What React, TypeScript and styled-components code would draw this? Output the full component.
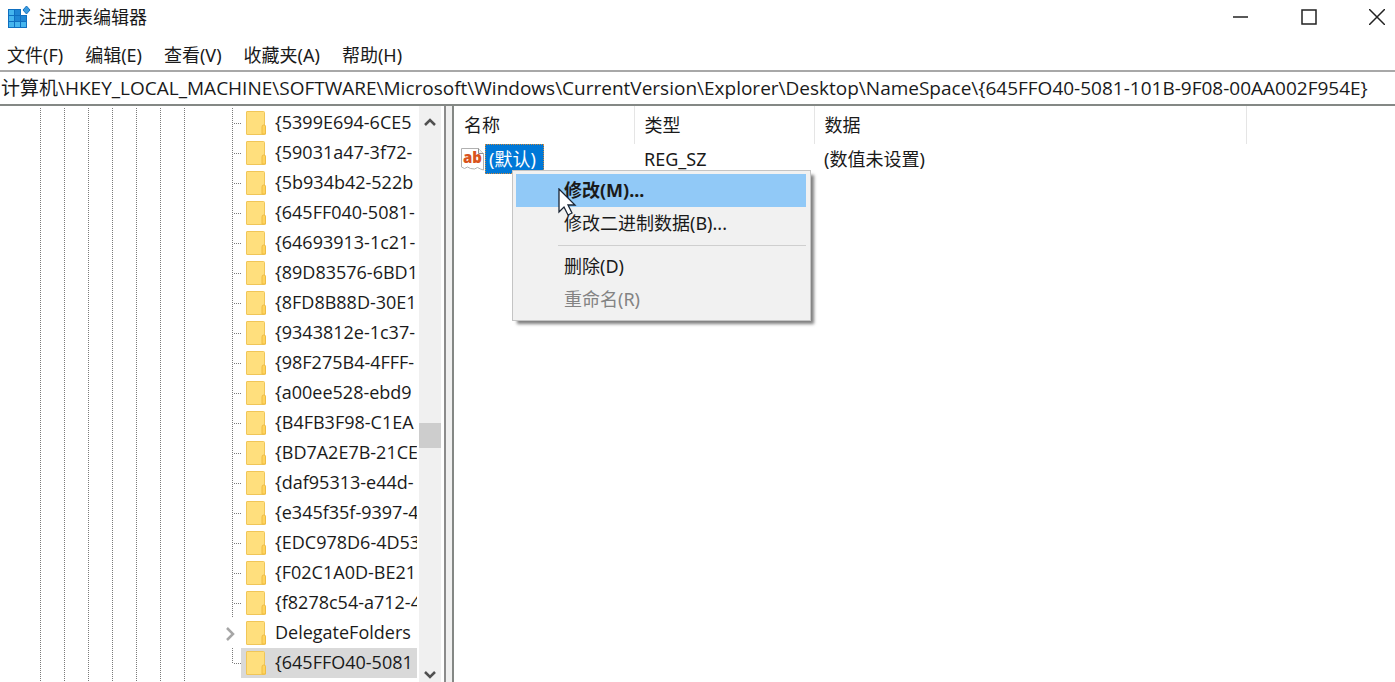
import React from "react";
import styled, { createGlobalStyle, css } from "styled-components";

const GlobalStyle = createGlobalStyle`
  * { box-sizing: border-box; }
  body {
    margin: 0;
    background: #fff;
    color: #1a1a1a;
    font: 18px/24px "Noto Sans", "Noto Sans CJK SC", sans-serif;
  }
  button, input {
    margin: 0;
    padding: 0;
    border: 0;
    background: none;
    color: inherit;
    font: inherit;
  }
`;

const Window = styled.div`
  display: flex;
  flex-direction: column;
  height: 100vh;
  overflow: hidden;
`;

const TitleBar = styled.header`
  display: flex;
  align-items: center;
  gap: 8px;
  height: 34px;
  padding-left: 7px;
`;

const Title = styled.h1`
  flex: 1;
  margin: 0;
  font-size: 18px;
  font-weight: 400;
`;

const CaptionButtons = styled.div`
  display: flex;
  gap: 32px;
`;

const CaptionButton = styled.button`
  display: flex;
  align-items: center;
  justify-content: center;
  width: 36px;
  height: 34px;
  svg { fill: none; stroke: #222; stroke-width: 1.5; }
`;

const MenuBar = styled.nav`
  display: flex;
  gap: 22px;
  height: 36px;
  padding: 6px 7px 0;
  align-items: center;
`;

const MenuBarItem = styled.button`
  white-space: nowrap;
`;

const AddressBar = styled.div`
  height: 36px;
  border-top: 2px solid #a8a8a8;
  border-bottom: 2px solid #848885;
`;

const AddressInput = styled.input`
  display: block;
  width: 100%;
  height: 32px;
  padding: 0 0 2px 1px;
  outline: 0;
  font-family: "Open Sans", "Noto Sans CJK SC", sans-serif;
  font-size: 19px;
`;

const Panes = styled.main`
  display: flex;
  flex: 1;
  min-height: 0;
`;

const TreePane = styled.section`
  display: flex;
  width: 446px;
  flex: none;
  border-right: 2px solid #8c8c8c;
`;

const Splitter = styled.div`
  width: 6px;
  flex: none;
  background: #f0f0f0;
`;

const TreeList = styled.ul`
  flex: 1;
  min-width: 0;
  margin: 0;
  padding: 2px 2px 0 28px;
  overflow: hidden;
  list-style: none;
`;

const TreeRow = styled.li`
  display: flex;
  height: 30px;
`;

const dots = css`
  background-image: repeating-linear-gradient(#7a7a7a 0 1px, transparent 1px 2px);
`;

const Guide = styled.span<{ $blank?: boolean }>`
  width: 24px;
  flex: none;
  padding-left: 12px;
  &::before {
    content: "";
    display: ${(p) => (p.$blank ? "none" : "block")};
    width: 1px;
    height: 100%;
    ${dots}
  }
`;

const Branch = styled.span<{ $last?: boolean }>`
  display: grid;
  grid-template-columns: 1px 9px;
  grid-template-rows: 15px 15px;
  width: 21px;
  flex: none;
  padding-left: 12px;
  &::before {
    content: "";
    grid-row: ${(p) => (p.$last ? "1" : "1 / 3")};
    ${dots}
  }
  &::after {
    content: "";
    grid-column: 2;
    grid-row: 2;
    height: 1px;
    background-image: repeating-linear-gradient(90deg, transparent 0 1px, #7a7a7a 1px 2px);
  }
`;

const Expander = styled.button`
  display: flex;
  align-items: center;
  width: 21px;
  flex: none;
  padding-left: 5px;
`;

const TreeItem = styled.span<{ $selected?: boolean }>`
  display: flex;
  flex: 1;
  min-width: 0;
  align-items: center;
  gap: 9px;
  padding-left: 5px;
  overflow: hidden;
  white-space: nowrap;
  background: ${(p) => (p.$selected ? "#d9d9d9" : "transparent")};
  svg { flex: none; }
`;

const TreeLabel = styled.span`
  padding-bottom: 2px;
  font-family: "Open Sans", "Noto Sans CJK SC", sans-serif;
`;

const ParentItem = styled(TreeItem)`
  padding: 2px 0 0 2px;
`;

const ScrollBar = styled.div`
  display: flex;
  flex-direction: column;
  align-items: center;
  width: 22px;
  margin-right: 3px;
  flex: none;
  background: #f0f0f0;
`;

const ScrollButton = styled.button<{ $height: number }>`
  display: flex;
  align-items: center;
  justify-content: center;
  width: 22px;
  height: ${(p) => p.$height}px;
  flex: none;
`;

const ScrollTrack = styled.div`
  display: grid;
  flex: 1;
  width: 100%;
  grid-template-rows: 17fr 25px 13fr;
`;

const ScrollThumb = styled.div`
  grid-row: 2;
  background: #cdcdcd;
`;

const ValuePane = styled.section`
  position: relative;
  flex: 1;
  min-width: 0;
  border-left: 2px solid #848885;
`;

const ValueTable = styled.table`
  width: 793px;
  border-collapse: collapse;
  table-layout: fixed;
  th, td {
    padding: 0 0 0 10px;
    text-align: left;
    font-weight: 400;
    white-space: nowrap;
  }
  th { height: 38px; border-right: 1px solid #e5e5e5; }
  td { height: 30px; }
  td:first-child { padding-left: 7px; }
`;

const ValueName = styled.div`
  display: flex;
  align-items: center;
  gap: 1px;
`;

const SelectedName = styled.span`
  height: 30px;
  padding: 0 7px 0 3px;
  border: 1px dotted #d08a3c;
  line-height: 28px;
  background: #0078d7;
  color: #fff;
`;

const ContextMenu = styled.ul`
  position: absolute;
  top: 64px;
  left: 58px;
  width: 299px;
  margin: 0;
  padding: 3px 4px 4px 3px;
  border: 1px solid #c4c4c4;
  list-style: none;
  background: #f1f1f1;
  box-shadow: 4px 4px 3px -1px rgba(0, 0, 0, 0.5);
`;

const ContextItem = styled.button<{ $active?: boolean }>`
  display: block;
  width: 100%;
  height: 33px;
  padding: 0 0 1px 48px;
  text-align: left;
  font-weight: ${(p) => (p.$active ? 700 : 400)};
  background: ${(p) => (p.$active ? "#91c9f7" : "transparent")};
  &:disabled { color: #838383; }
`;

const Separator = styled.li`
  height: 1px;
  margin: 5px 0 4px 42px;
  background: #cfcfcf;
`;

const Cursor = styled.svg`
  position: absolute;
  top: 82px;
  left: 104px;
  pointer-events: none;
`;

const RegistryIcon = () => (
  <svg width="24" height="24" viewBox="0 0 24 24" aria-hidden="true">
    <path d="M1 4h13v6h6v13H1z" fill="#0f6fc0" />
    <path d="M2 5h5v5H2zM2 11h5v5H2zM2 17h5v5H2zM8 17h5v5H8zM14 17h5v5h-5z" fill="#45b5ee" />
    <path d="M8 5h5v5H8zM8 11h5v5H8zM14 11h5v5h-5z" fill="#1f86d4" />
    <path d="M19.500 1l3.500 4-3.500 4L16 5z" fill="#3a9be0" stroke="#1673bf" />
  </svg>
);

const FolderIcon = () => (
  <svg width="20" height="24" viewBox="0 0 20 24" aria-hidden="true">
    <path d="M1 .5h16.500q1 0 1 1V14l1 1v7.500q0 1-1 1H1q-.5 0-.5-.5V1Q.5.5 1 .5z" fill="#ffdf7d" stroke="#f0c658" />
    <path d="M16 23v-7q0-2 1.500-2t2 1.500V23z" fill="#ffd45e" stroke="#eebc45" />
  </svg>
);

const StringIcon = () => (
  <svg width="23" height="24" viewBox="0 0 23 24" aria-hidden="true">
    <path d="M.5 1.500h17l5 5V23l-3-1-3-1.500-3 1.500-4-.5-3-1.500-3 1.500L.5 20z" fill="#fff" stroke="#b0b0b0" />
    <path d="M17.500 1.500v5h5" fill="#eee" stroke="#8f8f8f" />
    <text x="2" y="16" fontFamily="Open Sans, sans-serif" fontSize="15" fontWeight="800" fill="#d9541e">ab</text>
  </svg>
);

const entries = [
  "{5399E694-6CE5",
  "{59031a47-3f72-",
  "{5b934b42-522b",
  "{645FF040-5081-",
  "{64693913-1c21-",
  "{89D83576-6BD1",
  "{8FD8B88D-30E1",
  "{9343812e-1c37-",
  "{98F275B4-4FFF-",
  "{a00ee528-ebd9",
  "{B4FB3F98-C1EA",
  "{BD7A2E7B-21CE",
  "{daf95313-e44d-",
  "{e345f35f-9397-4",
  "{EDC978D6-4D53",
  "{F02C1A0D-BE21",
  "{f8278c54-a712-4",
];

const Guides = () => (
  <>
    {[0, 1, 2, 3, 4, 5, 6].map((n) => <Guide key={n} />)}
  </>
);

export default function App() {
  return (
    <>
      <GlobalStyle />
      <Window>
        <TitleBar>
          <RegistryIcon />
          <Title>注册表编辑器</Title>
          <CaptionButtons>
            <CaptionButton aria-label="最小化">
              <svg width="16" height="16"><path d="M0 8h15" /></svg>
            </CaptionButton>
            <CaptionButton aria-label="最大化">
              <svg width="16" height="16"><path d="M1 1h14v14H1z" /></svg>
            </CaptionButton>
            <CaptionButton aria-label="关闭">
              <svg width="16" height="16"><path d="M0 0l16 16M16 0L0 16" /></svg>
            </CaptionButton>
          </CaptionButtons>
        </TitleBar>
        <MenuBar>
          {["文件(F)", "编辑(E)", "查看(V)", "收藏夹(A)", "帮助(H)"].map((m) => <MenuBarItem key={m}>{m}</MenuBarItem>)}
        </MenuBar>
        <AddressBar>
          <AddressInput
            aria-label="地址"
            defaultValue={"计算机\\HKEY_LOCAL_MACHINE\\SOFTWARE\\Microsoft\\Windows\\CurrentVersion\\Explorer\\Desktop\\NameSpace\\{645FFO40-5081-101B-9F08-00AA002F954E}"}
          />
        </AddressBar>
        <Panes>
          <TreePane>
            <TreeList>
              {entries.map((e) => (
                <TreeRow key={e}>
                  <Guides /><Guide $blank /><Branch />
                  <TreeItem><FolderIcon /><TreeLabel>{e}</TreeLabel></TreeItem>
                </TreeRow>
              ))}
              <TreeRow>
                <Guides /><Guide $blank />
                <Expander aria-label="展开">
                  <svg width="12" height="16" fill="none" stroke="#a6a6a6" strokeWidth="2.500"><path d="M2 3l6 6-6 6" /></svg>
                </Expander>
                <TreeItem><FolderIcon /><TreeLabel>DelegateFolders</TreeLabel></TreeItem>
              </TreeRow>
              <TreeRow>
                <Guides /><Guide $blank /><Branch $last />
                <TreeItem $selected><FolderIcon /><TreeLabel>{"{645FFO40-5081"}</TreeLabel></TreeItem>
              </TreeRow>
              <TreeRow>
                <Guides />
                <ParentItem><FolderIcon /></ParentItem>
              </TreeRow>
            </TreeList>
            <ScrollBar>
              <ScrollButton $height={32} aria-label="向上滚动">
                <svg width="14" height="12" fill="none" stroke="#505050" strokeWidth="2.500"><path d="M2 9l5-5 5 5" /></svg>
              </ScrollButton>
              <ScrollTrack><ScrollThumb /></ScrollTrack>
              <ScrollButton $height={16} aria-label="向下滚动">
                <svg width="14" height="12" fill="none" stroke="#505050" strokeWidth="2.500"><path d="M2 4l5 5 5-5" /></svg>
              </ScrollButton>
            </ScrollBar>
          </TreePane>
          <Splitter />
          <ValuePane>
            <ValueTable>
              <colgroup><col width="180" /><col width="180" /><col /></colgroup>
              <thead><tr><th>名称</th><th>类型</th><th>数据</th></tr></thead>
              <tbody>
                <tr>
                  <td><ValueName><StringIcon /><SelectedName>(默认)</SelectedName></ValueName></td>
                  <td>REG_SZ</td>
                  <td>(数值未设置)</td>
                </tr>
              </tbody>
            </ValueTable>
            <ContextMenu>
              <li><ContextItem $active>修改(M)...</ContextItem></li>
              <li><ContextItem>修改二进制数据(B)...</ContextItem></li>
              <Separator />
              <li><ContextItem>删除(D)</ContextItem></li>
              <li><ContextItem disabled>重命名(R)</ContextItem></li>
            </ContextMenu>
            <Cursor width="20" height="30" viewBox="0 0 20 30" aria-hidden="true">
              <path d="M1 1v23l5-5 4 8 4-2-4-8h7z" fill="#fff" stroke="#1a2433" strokeWidth="1.300" />
            </Cursor>
          </ValuePane>
        </Panes>
      </Window>
    </>
  );
}
